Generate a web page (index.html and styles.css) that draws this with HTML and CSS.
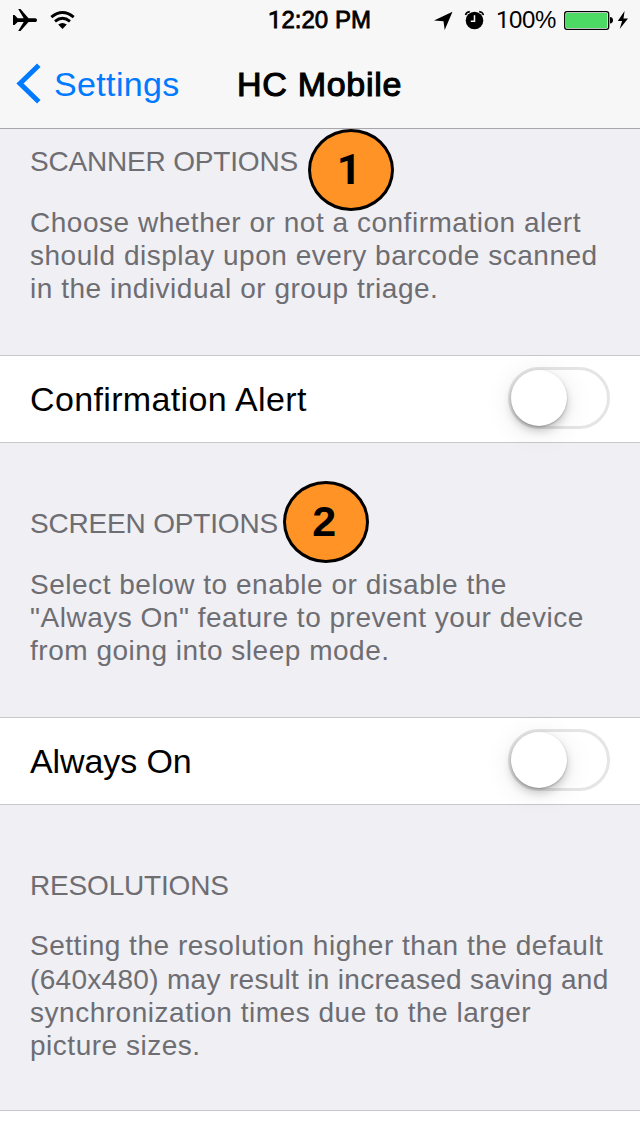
FILE: index.html
```html
<!DOCTYPE html>
<html lang="en">
<head>
<meta charset="utf-8">
<title>HC Mobile</title>
<link rel="stylesheet" href="styles.css">
</head>
<body>
<header class="top">
  <div class="status">
    <div class="status-left">
      <svg width="26" height="24" viewBox="12 8 26 24"><path d="M13 15h1.500l3.200 3.200h6L18.200 9h2.300L28.500 18.200h6.500c2.700 0 2.700 3.800 0 3.800h-6.500L20.500 31h-2.300L23.700 22h-6L14.500 25H13z"/></svg>
      <svg class="wifi" width="26" height="20" viewBox="50 10 26 20"><g fill="none" stroke="#000" stroke-width="2.900"><path d="M51.300 17.100Q62.500 7.700 73.700 17.100"/><path d="M55 21.300Q62.500 15.100 70 21.300"/></g><path d="M58.200 24.600Q62.500 21.400 66.800 24.600L62.500 29z"/></svg>
    </div>
    <div class="clock"><span class="one">1</span>2:20 PM</div>
    <div class="status-right">
      <svg width="19" height="19" viewBox="434 11 19 19"><path d="M434 20.500L452.500 11.800L444.700 30L443.500 21.300z"/></svg>
      <svg class="alarm" width="20" height="20" viewBox="464 10 20 20"><circle cx="474.500" cy="20.500" r="8.800"/><path fill="none" stroke="#000" stroke-width="1.600" d="M465.500 15q.7-3 4.300-3.400M479.200 11.600q3.600.4 4.300 3.400"/><path fill="none" stroke="#f7f7f7" stroke-width="1.500" d="M474.500 15.200V21.200H470.800"/></svg>
      <span class="percent"><span class="one">1</span>00%</span>
      <svg class="battery" width="50" height="20" viewBox="563 10 50 20"><rect x="564.700" y="11.700" width="44" height="17.600" rx="2.200" fill="#fff" stroke="#000" stroke-width="1.300"/><rect x="566" y="13" width="41.400" height="15" rx=".8" fill="#4cd964"/><path d="M610 17q3 .3 3 3.300t-3 3.300z"/></svg>
      <svg class="bolt" width="11" height="18" viewBox="617 11 11 18"><path d="M624.600 11L617.800 21h4.300L619.700 29L628 18.400h-4.500z"/></svg>
    </div>
  </div>
  <nav class="nav">
    <svg class="chevron" width="26" height="42" viewBox="16 64 26 42"><path fill="none" stroke="#007aff" stroke-width="5" d="M38.800 66.300L20 84.500L38.800 102.700"/></svg>
    <span class="back">Settings</span>
    <h1 class="title">HC Mobile</h1>
  </nav>
</header>
<main>
  <section class="info info-first">
    <h2 class="heading">SCANNER OPTIONS<b class="badge badge-one"><span class="one">1</span></b></h2>
    <p class="copy"><span>Choose whether or not a confirmation alert</span><span>should display upon every barcode scanned</span><span>in the individual or group triage.</span></p>
  </section>
  <div class="row"><span class="label-confirm">Confirmation Alert</span><span class="switch"><i class="knob"></i></span></div>
  <section class="info info-screen">
    <h2 class="heading">SCREEN OPTIONS<b class="badge badge-two"><span>2</span></b></h2>
    <p class="copy"><span>Select below to enable or disable the</span><span>"Always On" feature to prevent your device</span><span>from going into sleep mode.</span></p>
  </section>
  <div class="row"><span class="label-always">Always On</span><span class="switch"><i class="knob"></i></span></div>
  <section class="info info-resolution">
    <h2 class="heading">RESOLUTIONS</h2>
    <p class="copy"><span class="lead">Setting the resolution higher than the default</span><span class="dense">(640x480) may result in increased saving and</span><span>synchronization times due to the larger</span><span>picture sizes.</span></p>
  </section>
  <div class="row row-last"></div>
</main>
</body>
</html>
```
FILE: styles.css
```css
* { box-sizing: border-box; }
body {
  margin: 0;
  height: 1136px;
  overflow: hidden;
  background: #efeff4;
  color: #000;
  font-family: "Liberation Sans", Arial, sans-serif;
}
svg { display: block; flex: none; }
.one { font-family: Roboto, "Liberation Sans", sans-serif; line-height: 1; }
.top { height: 129px; background: #f7f7f7; border-bottom: 1px solid #a7a7aa; }
.status { height: 40px; display: grid; grid-template-columns: 268px 1fr 207px; align-items: center; white-space: nowrap; }
.status-left { display: flex; align-items: center; padding-left: 12px; gap: 12px; }
.clock { font-size: 24px; line-height: 40px; -webkit-text-stroke: .8px #000; }
.status-right { display: flex; align-items: center; padding-left: 1px; }
.alarm { margin-left: 11px; }
.percent { font-size: 24px; line-height: 40px; width: 61px; margin-left: 12px; letter-spacing: -.4px; }
.battery { margin-left: 6px; }
.bolt { margin-left: 4px; }
.nav { height: 88px; display: grid; grid-template-columns: 38px 183px 1fr; align-items: center; padding-left: 16px; }
.back, .title { font-size: 34px; line-height: 40px; white-space: nowrap; }
.back { color: #007aff; letter-spacing: .35px; }
.title { margin: 0; font-weight: 400; letter-spacing: .7px; -webkit-text-stroke: 1.1px #000; }
.info { padding-left: 30px; color: #6d6d72; font-size: 28px; line-height: 33px; white-space: nowrap; }
.info-first { height: 226px; padding-top: 16px; }
.info-screen { height: 274px; padding-top: 64px; }
.info-resolution { height: 305px; padding-top: 64px; }
.heading { position: relative; margin: 0 0 28px; font-size: 28px; font-weight: 400; letter-spacing: -.18px; }
.copy { margin: 0; letter-spacing: .52px; }
.copy span { display: block; width: max-content; }
.copy .lead { margin: -1px 0 1px; }
.copy .dense { letter-spacing: .31px; }
.row { height: 88px; display: flex; align-items: center; justify-content: space-between; padding: 0 30px; background: #fff; border: solid #c8c7cc; border-width: 1px 0; font-size: 34px; }
.row-last { height: 26px; border-bottom: 0; }
.label-confirm { letter-spacing: .36px; }
.label-always { letter-spacing: -.1px; }
.badge { position: absolute; width: 86px; height: 82px; display: flex; align-items: center; justify-content: center; border: 3px solid #000; border-radius: 50%; background: #ff9326; color: #000; font-size: 43px; }
.badge-one { left: 278px; top: -16px; }
.badge-two { left: 253px; top: -26px; }
.badge span { margin: -2px 4px 0 0; }
.switch { width: 102px; height: 62px; margin-top: -2px; border: 3px solid #e5e5e5; border-radius: 31px; }
.knob { display: block; width: 56px; height: 56px; border-radius: 50%; background: #fff; box-shadow: 0 1px 2px rgba(0,0,0,.25), 0 5px 8px rgba(0,0,0,.18), 0 5px 28px rgba(0,0,0,.10); }
```
